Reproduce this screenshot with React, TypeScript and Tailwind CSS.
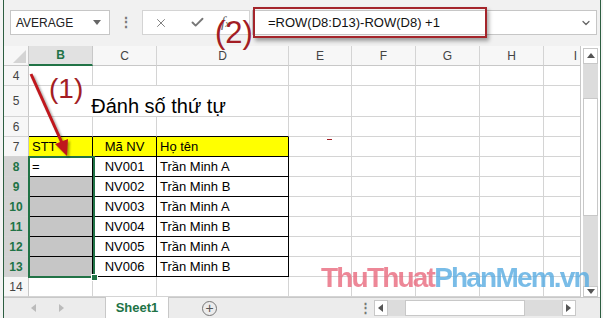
import React from "react";
import { X, Check, ChevronDown } from "lucide-react";

const colWidths = "grid-cols-[25px_64px_64px_132px_63px_64px_64px_64px_64px]";
const letters = ["B", "C", "D", "E", "F", "G", "H", "I"];
const rowNums = [4, 5, 6, 7, 8, 9, 10, 11, 12, 13, 14];

const data: Record<number, string[]> = {
  7: ["STT", "Mã NV", "Họ tên"],
  8: ["=", "NV001", "Trần Minh A"],
  9: ["", "NV002", "Trần Minh B"],
  10: ["", "NV003", "Trần Minh A"],
  11: ["", "NV004", "Trần Minh B"],
  12: ["", "NV005", "Trần Minh A"],
  13: ["", "NV006", "Trần Minh B"],
};

const Tri = ({ dir, className }: { dir: "up" | "down" | "left" | "right"; className?: string }) => {
  const pts = {
    up: "0,6 4,1 8,6",
    down: "0,1 8,1 4,6",
    left: "6,0 6,8 1,4",
    right: "1,0 1,8 6,4",
  }[dir];
  return (
    <svg width="8" height="8" viewBox="0 0 8 8" className={className}>
      <polygon points={pts} fill="currentColor" />
    </svg>
  );
};

const DataCell = ({ r, c }: { r: number; c: number }) => {
  const inTable = r >= 7 && r <= 13 && c >= 1 && c <= 3;
  let cls = "flex items-end leading-[18px] text-[13px] text-black border-r border-b whitespace-nowrap overflow-visible ";
  if (inTable) cls += "border-black ";
  else if (r === 6 && c <= 3) cls += "border-[#d4d4d4] border-b-black ";
  else cls += "border-[#d4d4d4] ";
  if (r === 7 && inTable) cls += "bg-[#ffff00] ";
  else if (r >= 9 && r <= 13 && c === 1) cls += "bg-[#c6c6c6] ";
  else cls += "bg-white ";
  const text = inTable ? data[r][c - 1] : "";
  if (c === 2) cls += "justify-center ";
  else cls += "pl-[3px] ";
  return <div className={cls}>{text}</div>;
};

export default function App() {
  return (
    <div className="relative w-[603px] h-[318px] overflow-hidden bg-[#f1f1f1] font-['Liberation_Sans',Arial,sans-serif] flex">
      <div className="w-[3px] bg-[#f4f4f4]" />
      <div className="w-px bg-[#2d5e41]" />

      <div className="w-[596px] flex flex-col">
        {/* formula bar */}
        <div className="h-[46px] flex items-start pt-[10px]">
          <div className="ml-[6px] w-[100px] h-[25px] bg-white border border-[#c6c6c6] flex items-center justify-between pl-[5px] pr-[8px] text-[12px] text-[#222]">
            <span>AVERAGE</span>
            <Tri dir="down" className="text-[#666]" />
          </div>
          <div className="w-[32px] h-[25px] flex items-center justify-center text-[#777] text-[14px] font-bold">⋮</div>
          <div className="w-[108px] h-[25px] bg-white border border-[#d4d4d4] flex items-center text-[#777]">
            <X size={14} strokeWidth={1.6} className="ml-[11px]" />
            <Check size={15} strokeWidth={3} className="ml-[22px]" />
            <span className="ml-[16px] italic font-['Liberation_Serif',serif] text-[15px] text-[#666]">f<span className="text-[10px]">x</span></span>
          </div>
          <div className="ml-[2px] w-[345px] h-[25px] bg-white border border-[#c6c6c6] flex items-center justify-between pl-[15px] pr-[4px] text-[13px] text-[#111]">
            <span>=ROW(D8:D13)-ROW(D8) +1</span>
            <ChevronDown size={12} strokeWidth={2.5} className="text-[#666]" />
          </div>
        </div>

        {/* sheet */}
        <div className="h-[251px] flex bg-white">
          <div className="relative w-[576px] overflow-hidden">
            <div className={`grid ${colWidths} grid-rows-[20px_20px_31px_repeat(9,20px)] w-[604px]`}>
              {/* column headers */}
              <div className="relative bg-[#f7f7f7] border-r border-b border-[#c8c8c8]">
                <svg width="13" height="13" viewBox="0 0 13 13" className="absolute right-[2px] bottom-[2px]">
                  <polygon points="13,0 13,13 0,13" fill="#d4d4d4" />
                </svg>
              </div>
              {letters.map((l) =>
                l === "B" ? (
                  <div key={l} className="flex items-center justify-center bg-[#e1e1e1] border-r border-[#c8c8c8] border-b-2 border-b-[#217346] text-[12px] font-bold text-[#217346]">
                    {l}
                  </div>
                ) : (
                  <div key={l} className="flex items-center justify-center bg-[#f7f7f7] border-r border-b border-[#d4d4d4] border-b-[#c8c8c8] text-[12px] text-[#444]">
                    {l}
                  </div>
                )
              )}

              {rowNums.map((r) => {
                const sel = r >= 8 && r <= 13;
                return (
                  <React.Fragment key={r}>
                    <div
                      className={
                        "flex items-center justify-center border-r border-b border-[#d4d4d4] border-r-[#c8c8c8] text-[12px] " +
                        (sel ? "bg-[#d2d2d2] text-[#217346] font-bold" : "bg-[#f7f7f7] text-[#444]")
                      }
                    >
                      {r}
                    </div>
                    {r === 5 ? (
                      <>
                        <div className="col-span-3 flex items-end justify-center leading-[20px] text-[20px] text-black border-r border-b border-[#d4d4d4] bg-white">
                          Đánh số thứ tự
                        </div>
                        {[4, 5, 6, 7, 8].map((c) => (
                          <DataCell key={c} r={r} c={c} />
                        ))}
                      </>
                    ) : (
                      [1, 2, 3, 4, 5, 6, 7, 8].map((c) => <DataCell key={c} r={r} c={c} />)
                    )}
                  </React.Fragment>
                );
              })}
            </div>

            {/* selection B8:B13 */}
            <div className="absolute left-[24px] top-[110px] w-[67px] h-[122px] border-2 border-[#217346]" />
            <div className="absolute left-[87px] top-[228px] w-[7px] h-[7px] bg-[#217346] border border-white" />
          </div>

          {/* vertical scrollbar */}
          <div className="w-[20px] border-l border-[#c8c8c8] flex flex-col pl-[2px] pr-[2px] bg-white">
            <div className="mt-[2px] h-[16px] bg-white border border-[#c8c8c8] flex items-center justify-center text-[#555]">
              <Tri dir="up" />
            </div>
            <div className="flex-1 bg-[#dcdcdc] flex flex-col">
              <div className="mt-[34px] h-[118px] bg-white border border-[#c8c8c8]" />
            </div>
            <div className="h-[11px] bg-white border border-[#c8c8c8] flex items-center justify-center text-[#555]">
              <Tri dir="down" />
            </div>
          </div>
        </div>

        {/* sheet tabs */}
        <div className="h-[21px] flex items-stretch bg-[#ececec] border-t border-[#c8c8c8]">
          <div className="w-[101px] flex items-center text-[#bbb]">
            <Tri dir="left" className="ml-[26px]" />
            <Tri dir="right" className="ml-[20px]" />
          </div>
          <div className="w-[64px] bg-white border-x border-[#c8c8c8] -mt-px flex items-center justify-center text-[13px] font-bold text-[#217346]">
            Sheet1
          </div>
          <div className="w-[190px] flex items-center">
            <div className="ml-[33px] w-[15px] h-[15px] rounded-full border border-[#777] flex items-center justify-center text-[#555] text-[14px] leading-none">
              +
            </div>
          </div>
          <div className="w-[15px] flex items-center text-[#777] text-[13px] font-bold">⋮</div>
          <div className="w-[202px] flex items-center bg-[#dcdcdc] my-[2px]">
            <div className="w-[14px] h-full bg-white border border-[#c8c8c8] flex items-center justify-center text-[#555]">
              <Tri dir="left" />
            </div>
            <div className="ml-[17px] w-[120px] h-full bg-white border border-[#c8c8c8]" />
            <div className="ml-auto w-[14px] h-full bg-white border border-[#c8c8c8] flex items-center justify-center text-[#555]">
              <Tri dir="right" />
            </div>
          </div>
        </div>
      </div>

      <div className="w-px bg-[#2d5e41]" />
      <div className="w-[2px] bg-[#f4f4f4]" />

      {/* annotations */}
      <div className="absolute left-[253px] top-[7px] w-[234px] h-[31px] border-2 border-[#a4252b] shadow-[2px_3px_4px_rgba(0,0,0,0.35)]" />
      <div className="absolute left-[215px] top-[17px] text-[31px] leading-none text-[#a31d24]">(2)</div>
      <div className="absolute left-[49px] top-[75px] text-[28px] leading-none text-[#a31d24]">(1)</div>
      <svg width="90" height="100" viewBox="0 0 90 100" className="absolute left-0 top-[65px] drop-shadow-[2px_2px_1px_rgba(0,0,0,0.35)]">
        <line x1="31" y1="9" x2="62" y2="78" stroke="#c0171d" strokeWidth="3" />
        <polygon points="67,91 55,79 68,74" fill="#c0171d" />
      </svg>
      <div className="absolute left-[327px] top-[139px] w-[5px] h-px bg-[#a31d24]" />

      {/* watermark */}
      <div className="absolute left-[321px] top-[264px] text-[28px] font-bold tracking-[-1.8px] leading-none opacity-80">
        <span className="text-[#e96a7e]">ThuThuat</span>
        <span className="text-[#58ace2]">PhanMem.vn</span>
      </div>
    </div>
  );
}
